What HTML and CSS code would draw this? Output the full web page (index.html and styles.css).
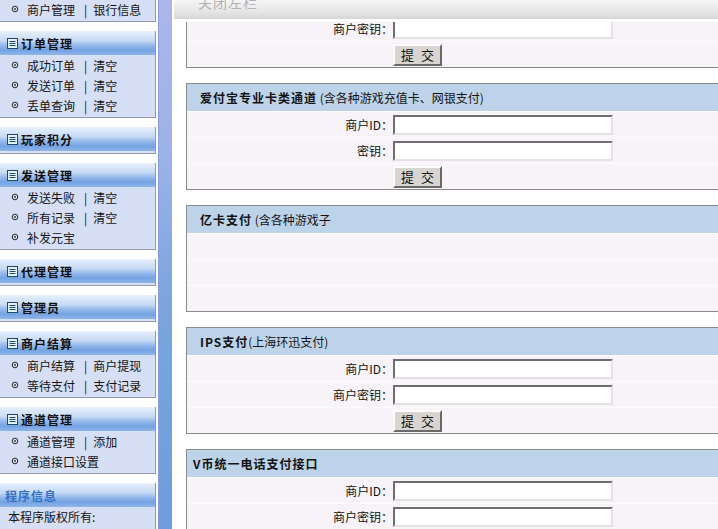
FILE: index.html
```html
<!DOCTYPE html>
<html lang="zh-CN">
<head>
<meta charset="utf-8">
<title>管理后台</title>
<link rel="stylesheet" href="styles.css">
</head>
<body>
<div class="frame">
  <aside class="sidebar">
    <div class="sidebar-inner">
      <section class="block">
        <div class="block-head"><svg class="ico" viewBox="0 0 11 11"><rect x="0.5" y="0.5" width="10" height="10"/><path d="M2.5 3.5h6M2.5 5.5h6M2.5 7.5h6"/></svg>商户管理</div>
        <ul class="items">
          <li class="item"><svg class="dot" viewBox="0 0 8 8"><circle cx="4" cy="4" r="2.8"/><circle class="c" cx="4" cy="4" r="0.9"/></svg>商户管理<span class="sep">|</span>银行信息</li>
        </ul>
      </section>
      <section class="block">
        <div class="block-head"><svg class="ico" viewBox="0 0 11 11"><rect x="0.5" y="0.5" width="10" height="10"/><path d="M2.5 3.5h6M2.5 5.5h6M2.5 7.5h6"/></svg>订单管理</div>
        <ul class="items">
          <li class="item"><svg class="dot" viewBox="0 0 8 8"><circle cx="4" cy="4" r="2.8"/><circle class="c" cx="4" cy="4" r="0.9"/></svg>成功订单<span class="sep">|</span>清空</li>
          <li class="item"><svg class="dot" viewBox="0 0 8 8"><circle cx="4" cy="4" r="2.8"/><circle class="c" cx="4" cy="4" r="0.9"/></svg>发送订单<span class="sep">|</span>清空</li>
          <li class="item"><svg class="dot" viewBox="0 0 8 8"><circle cx="4" cy="4" r="2.8"/><circle class="c" cx="4" cy="4" r="0.9"/></svg>丢单查询<span class="sep">|</span>清空</li>
        </ul>
      </section>
      <section class="block">
        <div class="block-head"><svg class="ico" viewBox="0 0 11 11"><rect x="0.5" y="0.5" width="10" height="10"/><path d="M2.5 3.5h6M2.5 5.5h6M2.5 7.5h6"/></svg>玩家积分</div>
      </section>
      <section class="block">
        <div class="block-head"><svg class="ico" viewBox="0 0 11 11"><rect x="0.5" y="0.5" width="10" height="10"/><path d="M2.5 3.5h6M2.5 5.5h6M2.5 7.5h6"/></svg>发送管理</div>
        <ul class="items">
          <li class="item"><svg class="dot" viewBox="0 0 8 8"><circle cx="4" cy="4" r="2.8"/><circle class="c" cx="4" cy="4" r="0.9"/></svg>发送失败<span class="sep">|</span>清空</li>
          <li class="item"><svg class="dot" viewBox="0 0 8 8"><circle cx="4" cy="4" r="2.8"/><circle class="c" cx="4" cy="4" r="0.9"/></svg>所有记录<span class="sep">|</span>清空</li>
          <li class="item"><svg class="dot" viewBox="0 0 8 8"><circle cx="4" cy="4" r="2.8"/><circle class="c" cx="4" cy="4" r="0.9"/></svg>补发元宝</li>
        </ul>
      </section>
      <section class="block">
        <div class="block-head"><svg class="ico" viewBox="0 0 11 11"><rect x="0.5" y="0.5" width="10" height="10"/><path d="M2.5 3.5h6M2.5 5.5h6M2.5 7.5h6"/></svg>代理管理</div>
      </section>
      <section class="block">
        <div class="block-head"><svg class="ico" viewBox="0 0 11 11"><rect x="0.5" y="0.5" width="10" height="10"/><path d="M2.5 3.5h6M2.5 5.5h6M2.5 7.5h6"/></svg>管理员</div>
      </section>
      <section class="block">
        <div class="block-head"><svg class="ico" viewBox="0 0 11 11"><rect x="0.5" y="0.5" width="10" height="10"/><path d="M2.5 3.5h6M2.5 5.5h6M2.5 7.5h6"/></svg>商户结算</div>
        <ul class="items">
          <li class="item"><svg class="dot" viewBox="0 0 8 8"><circle cx="4" cy="4" r="2.8"/><circle class="c" cx="4" cy="4" r="0.9"/></svg>商户结算<span class="sep">|</span>商户提现</li>
          <li class="item"><svg class="dot" viewBox="0 0 8 8"><circle cx="4" cy="4" r="2.8"/><circle class="c" cx="4" cy="4" r="0.9"/></svg>等待支付<span class="sep">|</span>支付记录</li>
        </ul>
      </section>
      <section class="block">
        <div class="block-head"><svg class="ico" viewBox="0 0 11 11"><rect x="0.5" y="0.5" width="10" height="10"/><path d="M2.5 3.5h6M2.5 5.5h6M2.5 7.5h6"/></svg>通道管理</div>
        <ul class="items">
          <li class="item"><svg class="dot" viewBox="0 0 8 8"><circle cx="4" cy="4" r="2.8"/><circle class="c" cx="4" cy="4" r="0.9"/></svg>通道管理<span class="sep">|</span>添加</li>
          <li class="item"><svg class="dot" viewBox="0 0 8 8"><circle cx="4" cy="4" r="2.8"/><circle class="c" cx="4" cy="4" r="0.9"/></svg>通道接口设置</li>
        </ul>
      </section>
      <section class="block info">
        <div class="block-head info-head">程序信息</div>
        <div class="info-text">本程序版权所有:</div>
      </section>
    </div>
  </aside>
  <div class="divider"></div>
  <main class="main">
    <div class="topbar"><span>关闭左栏</span></div>
    <div class="viewport">
      <div class="content">
        <section class="panel">
          <div class="panel-head"><b>支付接口</b></div>
          <div class="row"><span class="label">商户ID：</span><input class="field" type="text"></div>
          <div class="row"><span class="label">商户密钥：</span><input class="field" type="text"></div>
          <div class="row"><button class="btn" type="button">提 交</button></div>
        </section>
        <section class="panel">
          <div class="panel-head"><b>爱付宝专业卡类通道</b> (含各种游戏充值卡、网银支付)</div>
          <div class="row"><span class="label">商户ID：</span><input class="field" type="text"></div>
          <div class="row"><span class="label">密钥：</span><input class="field" type="text"></div>
          <div class="row"><button class="btn" type="button">提 交</button></div>
        </section>
        <section class="panel">
          <div class="panel-head"><b>亿卡支付</b> (含各种游戏子</div>
          <div class="row"></div>
          <div class="row"></div>
          <div class="row"></div>
        </section>
        <section class="panel">
          <div class="panel-head"><b>IPS支付</b>(上海环迅支付)</div>
          <div class="row"><span class="label">商户ID：</span><input class="field" type="text"></div>
          <div class="row"><span class="label">商户密钥：</span><input class="field" type="text"></div>
          <div class="row"><button class="btn" type="button">提 交</button></div>
        </section>
        <section class="panel">
          <div class="panel-head tight"><b>V币统一电话支付接口</b></div>
          <div class="row"><span class="label">商户ID：</span><input class="field" type="text"></div>
          <div class="row"><span class="label">商户密钥：</span><input class="field" type="text"></div>
          <div class="row"><button class="btn" type="button">提 交</button></div>
        </section>
      </div>
    </div>
  </main>
</div>
</body>
</html>
```

FILE: styles.css
```css
html, body {
  margin: 0;
  padding: 0;
  background: #ffffff;
}
body {
  font-family: "Noto Sans CJK SC", "Liberation Sans", sans-serif;
  font-size: 12px;
  color: #141414;
  overflow: hidden;
}
.frame {
  display: flex;
  width: 718px;
  height: 529px;
  overflow: hidden;
}

/* ---------- sidebar ---------- */
.sidebar {
  width: 156px;
  flex: none;
  overflow: hidden;
}
.sidebar-inner {
  margin-top: -25px;
}
.block {
  background: #d6dff5;
  border-right: 1px solid #8e9ab0;
  border-bottom: 1px solid #8e9ab0;
  padding-bottom: 2px;
  margin-bottom: 9px;
}
.block-head {
  height: 24px;
  display: flex;
  align-items: center;
  gap: 3px;
  padding-left: 7px;
  font-weight: bold;
  letter-spacing: 1px;
  color: #101010;
  background: linear-gradient(#e8f0fc 0%, #c6daf5 40%, #98bbec 58%, #74a3e2 80%, #8fb6ea 100%);
}
.ico {
  width: 11px;
  height: 11px;
  flex: none;
}
.ico rect {
  fill: #e4f1f1;
  stroke: #1d4a66;
  stroke-width: 1;
}
.ico path {
  stroke: #1d4a66;
  stroke-width: 1;
}
.items {
  list-style: none;
  margin: 0;
  padding: 0;
}
.item {
  height: 20px;
  display: flex;
  align-items: center;
  padding-left: 11px;
  white-space: nowrap;
}
.dot {
  width: 8px;
  height: 8px;
  flex: none;
  margin-right: 8px;
}
.dot circle {
  fill: none;
  stroke: #2a2a2a;
  stroke-width: 1;
}
.dot circle.c {
  fill: #2a2a2a;
  stroke: none;
}
.sep {
  margin: 0 6px 0 9px;
}
.info-head {
  padding-left: 5px;
  color: #3570c4;
}
.info-text {
  height: 20px;
  line-height: 20px;
  padding-left: 8px;
}

/* ---------- divider ---------- */
.divider {
  width: 14px;
  flex: none;
  margin: 0 2px;
  background: linear-gradient(#abb6ec 0%, #9cb2ea 30%, #7ba6df 55%, #6d9ddb 100%);
  border-left: 1px solid #889ddf;
  box-sizing: border-box;
}

/* ---------- main ---------- */
.main {
  flex: 1;
  min-width: 0;
  display: flex;
  flex-direction: column;
  overflow: hidden;
}
.topbar {
  height: 19px;
  flex: none;
  overflow: hidden;
  padding-left: 24px;
  margin-bottom: 3px;
  background: linear-gradient(#f6f6f6 0%, #e6e6e6 60%, #d6d6d6 100%);
}
.topbar span {
  display: block;
  font-size: 14px;
  line-height: 16px;
  letter-spacing: 1px;
  color: #b3b3b3;
  margin-top: -6px;
}
.viewport {
  flex: 1;
  overflow: hidden;
}
.content {
  margin-top: -61px;
  padding-left: 12px;
}
.panel {
  width: 600px;
  border: 1px solid #8a8a8a;
  background: #f7f3f8;
  margin-bottom: 15px;
}
.panel-head {
  height: 27px;
  line-height: 27px;
  padding-left: 13px;
  background: #bdd3ea;
  white-space: nowrap;
  color: #141414;
}
.panel-head b {
  letter-spacing: 1px;
}
.panel-head.tight {
  padding-left: 6px;
}
.row {
  height: 25px;
  border-top: 1px solid #fdfbfd;
  display: flex;
  align-items: center;
}
.label {
  width: 206px;
  margin-right: -3px;
  flex: none;
  text-align: right;
  white-space: nowrap;
}
.field {
  width: 220px;
  height: 20px;
  box-sizing: border-box;
  margin: 0 0 0 3px;
  padding: 0;
  border: 2px solid;
  border-color: #6e6e6e #e2e2e2 #e2e2e2 #6e6e6e;
  background: #ffffff;
  font: inherit;
}
.btn {
  margin-left: 206px;
  width: 49px;
  height: 22px;
  padding: 0;
  box-sizing: border-box;
  background: #d8d5d0;
  border: 2px solid;
  border-color: #ffffff #6a6a6a #6a6a6a #ffffff;
  font-family: "Noto Sans CJK SC", sans-serif;
  font-size: 13px;
  line-height: 16px;
  word-spacing: 4px;
  color: #111;
}
```
